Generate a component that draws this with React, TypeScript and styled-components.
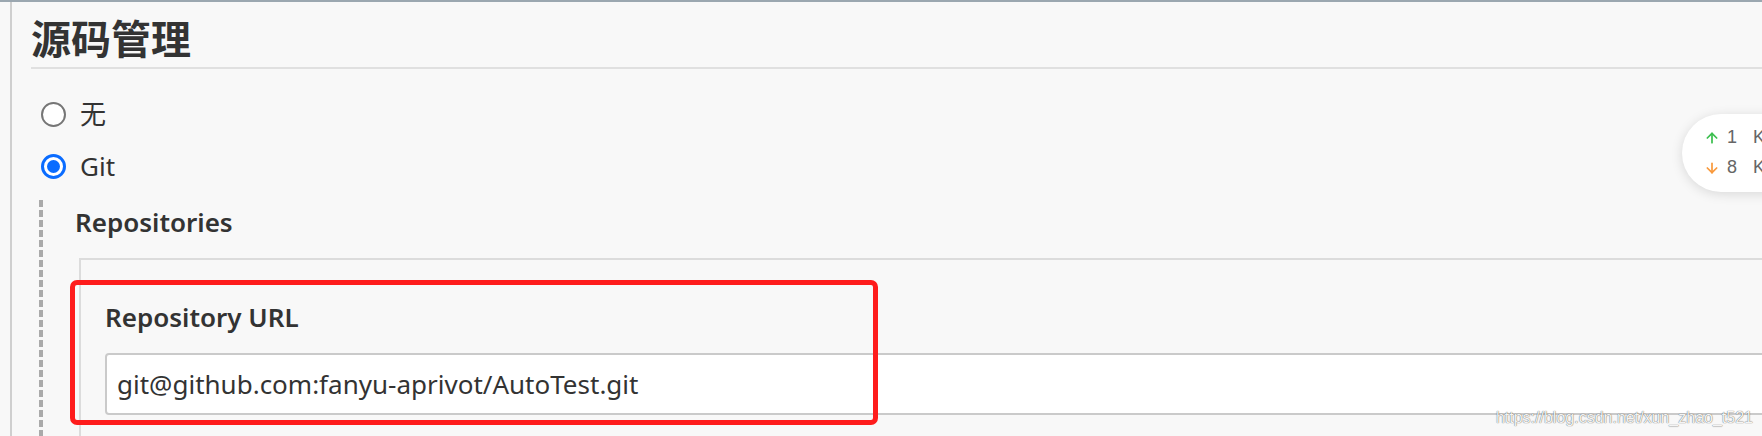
import styled, { createGlobalStyle } from "styled-components";
import { ArrowUp, ArrowDown } from "lucide-react";

const GlobalStyle = createGlobalStyle`
    html, body {
        margin: 0;
        padding: 0;
        background: #f8f8f8;
    }
    body {
        font-family: "Noto Sans", "Noto Sans CJK SC", sans-serif;
        color: #333;
    }
`

function App() {
    return (
        <>
            <GlobalStyle/>
            <Page>
                <Frame>
                    <Heading>源码管理</Heading>
                    <RadioList>
                        <RadioRow>
                            <Radio/>
                            <RadioLabel>无</RadioLabel>
                        </RadioRow>
                        <RadioRow>
                            <Radio checked/>
                            <RadioLabel>Git</RadioLabel>
                        </RadioRow>
                    </RadioList>
                    <GitSection>
                        <SectionLabel>Repositories</SectionLabel>
                        <RepoBox>
                            <Annotation/>
                            <SectionLabel>Repository URL</SectionLabel>
                            <UrlInput readOnly value="git@github.com:fanyu-aprivot/AutoTest.git"/>
                        </RepoBox>
                    </GitSection>
                </Frame>
                <SpeedWidget>
                    <SpeedRow>
                        <ArrowUp size={16} strokeWidth={2.6} color="#3cbf4f"/>
                        <span>1</span>
                        <span>K/s</span>
                    </SpeedRow>
                    <SpeedRow>
                        <ArrowDown size={16} strokeWidth={2.6} color="#f99a3d"/>
                        <span>8</span>
                        <span>K/s</span>
                    </SpeedRow>
                </SpeedWidget>
                <Watermark>https://blog.csdn.net/xun_zhao_t521</Watermark>
            </Page>
        </>
    )
}

const Page = styled.div`
    position: relative;
    width: 1762px;
    height: 436px;
    overflow: hidden;
    border-top: 2px solid #9ba7b0;
    box-sizing: border-box;
`

const Frame = styled.div`
    margin-left: 10px;
    height: 100%;
    border-left: 2px solid #cfcfcf;
    padding-left: 19px;
`

const Heading = styled.h2`
    margin: 0;
    padding-top: 12px;
    height: 53px;
    line-height: 50px;
    font-size: 40px;
    font-weight: 700;
    color: #333;
    border-bottom: 2px solid #e0e0e0;
`

const RadioList = styled.div`
    display: flex;
    flex-direction: column;
    margin-top: 19px;
    padding-left: 10px;
`

const RadioRow = styled.label`
    display: flex;
    align-items: center;
    gap: 14px;
    height: 52px;
`

const Radio = styled.span<{ checked?: boolean }>`
    width: 25px;
    height: 25px;
    box-sizing: border-box;
    border-radius: 50%;
    background: #fff;
    border: ${p => p.checked ? "3px solid #0a6cff" : "2px solid #767676"};
    display: flex;
    align-items: center;
    justify-content: center;

    &::after {
        content: "";
        display: ${p => p.checked ? "block" : "none"};
        width: 13px;
        height: 13px;
        border-radius: 50%;
        background: #0a6cff;
    }
`

const RadioLabel = styled.span`
    font-size: 26px;
    line-height: 36px;
    color: #333;
`

const GitSection = styled.div`
    margin-top: 8px;
    margin-left: 8px;
    padding-left: 36px;
    padding-top: 4px;
    height: 300px;
    background: linear-gradient(#aaa 0 7px, transparent 7px 10px) left top / 4px 10px repeat-y;
`

const SectionLabel = styled.div`
    font-size: 26px;
    line-height: 36px;
    font-weight: 600;
    color: #333;
`

const RepoBox = styled.div`
    position: relative;
    margin-top: 18px;
    margin-left: 4px;
    border-top: 2px solid #dcdcdc;
    border-left: 2px solid #dcdcdc;
    padding: 39px 0 0 24px;
    height: 200px;
`

const Annotation = styled.div`
    position: absolute;
    left: -11px;
    top: 20px;
    width: 808px;
    height: 145px;
    box-sizing: border-box;
    border: 5px solid #fe1c1c;
    border-radius: 7px;
    pointer-events: none;
    z-index: 2;
`

const UrlInput = styled.input`
    display: block;
    margin-top: 18px;
    width: 1700px;
    height: 62px;
    box-sizing: border-box;
    padding: 0 10px;
    border: 2px solid #cacaca;
    border-radius: 4px;
    background: #fff;
    font-family: "Noto Sans", sans-serif;
    font-size: 26px;
    color: #333;
    outline: none;
`

const SpeedWidget = styled.div`
    position: absolute;
    left: 1682px;
    top: 112px;
    width: 160px;
    height: 78px;
    box-sizing: border-box;
    padding: 10px 0 0 22px;
    display: flex;
    flex-direction: column;
    gap: 3px;
    background: #fff;
    border-radius: 39px 0 0 39px;
    box-shadow: 0 2px 12px rgba(0, 0, 0, 0.13);
`

const SpeedRow = styled.div`
    display: flex;
    align-items: center;
    gap: 7px;
    height: 27px;
    font-family: "Liberation Sans", sans-serif;
    font-size: 18px;
    color: #666;

    & > span:last-child {
        margin-left: 9px;
    }
`

const Watermark = styled.div`
    position: absolute;
    right: 9px;
    bottom: 9px;
    font-family: "Liberation Sans", sans-serif;
    font-size: 16px;
    color: rgba(255, 255, 255, 0.95);
    text-shadow: 0 0 1px rgba(0, 0, 0, 0.6), 0 0 1px rgba(0, 0, 0, 0.3);
`

export default App
